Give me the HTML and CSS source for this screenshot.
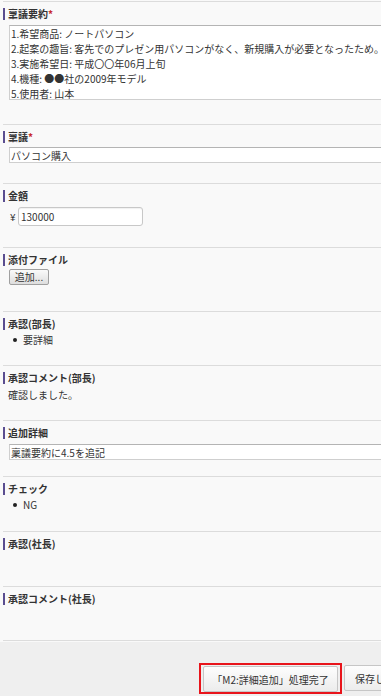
FILE: index.html
```html
<!DOCTYPE html>
<html lang="ja">
<head>
<meta charset="utf-8">
<title>稟議</title>
<link rel="stylesheet" href="styles.css">
</head>
<body>
<div class="page">
  <section class="field h123">
    <div class="label">稟議要約<span class="req">*</span></div>
    <textarea class="textarea" wrap="off" readonly>1.希望商品: ノートパソコン
2.起案の趣旨: 客先でのプレゼン用パソコンがなく、新規購入が必要となったため。
3.実施希望日: 平成〇〇年06月上旬
4.機種: ●●社の2009年モデル
5.使用者: 山本</textarea>
  </section>
  <section class="field h59">
    <div class="label">稟議<span class="req">*</span></div>
    <input class="text-wide mt4" type="text" value="パソコン購入" readonly>
  </section>
  <section class="field h64">
    <div class="label">金額</div>
    <div class="money">
      <span class="yen">¥</span>
      <input class="text-num" type="text" value="130000" readonly>
    </div>
  </section>
  <section class="field h64">
    <div class="label">添付ファイル</div>
    <button class="btn-small" type="button">追加...</button>
  </section>
  <section class="field h54">
    <div class="label">承認(部長)</div>
    <ul class="bullets"><li>要詳細</li></ul>
  </section>
  <section class="field h55">
    <div class="label">承認コメント(部長)</div>
    <p class="value">確認しました。</p>
  </section>
  <section class="field h56">
    <div class="label">追加詳細</div>
    <input class="text-wide text-wide--tall" type="text" value="稟議要約に4.5を追記" readonly>
  </section>
  <section class="field h55">
    <div class="label">チェック</div>
    <ul class="bullets"><li>NG</li></ul>
  </section>
  <section class="field h55">
    <div class="label">承認(社長)</div>
  </section>
  <section class="field h55 field--last">
    <div class="label">承認コメント(社長)</div>
  </section>
  <div class="footer">
    <div class="highlight"><button class="btn-action btn-action--main" type="button">「M2:詳細追加」処理完了</button></div>
    <button class="btn-action" type="button">保存して閉じる</button>
  </div>
</div>
</body>
</html>
```

FILE: styles.css
```css
html, body {
  margin: 0;
  padding: 0;
  background: #f9f9f9;
  overflow: hidden;
}
body {
  width: 381px;
  height: 696px;
  font-family: "Noto Sans CJK JP", "Noto Sans", sans-serif;
  font-size: 10px;
  color: #333;
}
.page {
  padding-top: 1px;
  width: 381px;
  overflow: hidden;
}
.field {
  box-sizing: border-box;
  margin-left: 3px;
  border-top: 1px solid #dcdcdc;
  padding-top: 6px;
}
.field--last {
  border-bottom: 1px solid #dcdcdc;
}
.h123 { height: 123px; }
.h64 { height: 64px; }
.h59 { height: 59px; }
.h56 { height: 56px; }
.h55 { height: 55px; }
.h54 { height: 54px; }

.label {
  border-left: 2px solid #5a4d90;
  padding-left: 3px;
  line-height: 12px;
  height: 12px;
  font-weight: bold;
  color: #333;
  white-space: nowrap;
}
.req {
  color: #c8282d;
}
.textarea {
  display: block;
  box-sizing: border-box;
  margin: 5px 0 0 6px;
  width: 420px;
  height: 75px;
  padding: 0 1px;
  border: 1px solid #cfcfcf;
  border-top-color: #b4b4b4;
  background: #fff;
  font-family: inherit;
  font-size: 10px;
  line-height: 15px;
  color: #333;
  resize: none;
  overflow: hidden;
  outline: none;
}
.text-wide {
  display: block;
  box-sizing: border-box;
  margin: 5px 0 0 6px;
  width: 420px;
  height: 16px;
  padding: 0 1px;
  border: 1px solid #cfcfcf;
  border-top-color: #b4b4b4;
  background: #fff;
  font-family: inherit;
  font-size: 10px;
  color: #333;
  outline: none;
}
.mt4 { margin-top: 4px; }
.text-wide--tall { height: 16px; }
.money {
  display: flex;
  align-items: center;
  margin-top: 5px;
  padding-left: 7px;
}
.yen {
  width: 8px;
  font-size: 10px;
}
.text-num {
  box-sizing: border-box;
  width: 125px;
  height: 19px;
  padding: 0 2px;
  border: 1px solid #c8c8c8;
  border-radius: 3px;
  background: #fff;
  box-shadow: inset 0 1px 1px rgba(0,0,0,0.06);
  font-family: inherit;
  font-size: 10px;
  color: #333;
  outline: none;
}
.btn-small {
  display: block;
  box-sizing: border-box;
  margin: 3px 0 0 6px;
  width: 40px;
  height: 16px;
  padding: 0;
  border: 1px solid #a0a0a0;
  border-radius: 2px;
  background: linear-gradient(#fafafa, #dedede);
  font-family: inherit;
  font-size: 10px;
  line-height: 14px;
  color: #333;
}
.bullets {
  list-style: none;
  margin: 3px 0 0;
  padding: 0 0 0 20px;
  line-height: 14px;
}
.bullets li {
  position: relative;
}
.bullets li::before {
  content: "";
  position: absolute;
  left: -10px;
  top: 5px;
  width: 4px;
  height: 4px;
  border-radius: 50%;
  background: #222;
}
.value {
  margin: 4px 0 0 5px;
  line-height: 14px;
}
.footer {
  display: flex;
  align-items: flex-start;
  height: 54px;
  box-sizing: border-box;
  padding: 21px 0 0 199px;
  background: #efefef;
  white-space: nowrap;
  overflow: hidden;
  margin-top: 1px;
}
.highlight {
  box-sizing: border-box;
  width: 143px;
  height: 31px;
  padding: 1px 0 0 2px;
  border: 2px solid #e8141b;
  flex: none;
}
.btn-action {
  box-sizing: border-box;
  height: 26px;
  padding: 0 10px;
  margin-top: 2px;
  margin-left: 2px;
  border: 1px solid #c6c6c6;
  border-radius: 2px;
  background: linear-gradient(#fdfdfd, #ececec);
  font-family: inherit;
  font-size: 10px;
  color: #333;
  flex: none;
}
.btn-action--main {
  width: 135px;
  margin: 0;
  padding: 0;
}
```
